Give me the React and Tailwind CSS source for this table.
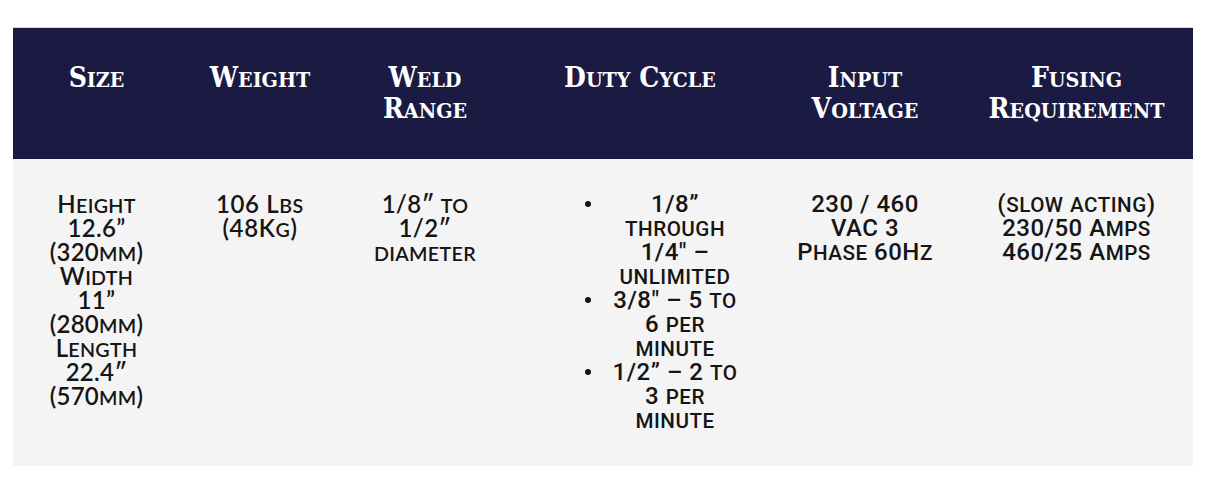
import React from "react";

const SmallCaps = ({ text, size = "body" }) => {
  const parts = text.split(/([a-z]+)/);
  const cls =
    size === "head"
      ? "text-[0.76em] leading-[0]"
      : size === "narrow"
      ? "text-[0.86em] leading-[0]"
      : "text-[0.82em] leading-[0]";
  return (
    <>
      {parts.map((part, i) =>
        /^[a-z]+$/.test(part) ? (
          <span key={i} className={cls}>
            {part.toUpperCase()}
          </span>
        ) : (
          <React.Fragment key={i}>{part}</React.Fragment>
        )
      )}
    </>
  );
};

const headers = [
  ["Size"],
  ["Weight"],
  ["Weld", "Range"],
  ["Duty Cycle"],
  ["Input", "Voltage"],
  ["Fusing", "Requirement"],
];

const wideFont = { fontFamily: "Lato, 'Open Sans', sans-serif" };
const narrowFont = { fontFamily: "Roboto, 'Liberation Sans', sans-serif" };

const Lines = ({ lines, font, size }) => (
  <div className="flex flex-col items-center text-center" style={font}>
    {lines.map((line, i) => (
      <div key={i} className="whitespace-nowrap h-[24px]">
        <SmallCaps text={line} size={size} />
      </div>
    ))}
  </div>
);

const dutyItems = [
  ["1/8”", "through", "1/4″ –", "unlimited"],
  ["3/8″ – 5 to", "6 per", "minute"],
  ["1/2” – 2 to", "3 per", "minute"],
];

const App = () => {
  return (
    <div className="w-[1214px] h-[491px] bg-white pt-[27px] px-[13px]">
      <div className="w-[1180px] border-t border-[#d4d4d4]">
        <div
          className="grid grid-cols-[167px_160px_170px_260px_190px_233px] h-[131px] bg-[#1b1a42] text-white font-bold text-[28px] leading-[31px] pt-[34px]"
          style={{ fontFamily: "'DejaVu Serif Condensed', 'DejaVu Serif', serif", fontStretch: "condensed" }}
        >
          {headers.map((h, i) => (
            <div key={i} className="flex flex-col items-center text-center">
              {h.map((line) => (
                <div key={line} className="whitespace-nowrap h-[31px]">
                  <SmallCaps text={line} size="head" />
                </div>
              ))}
            </div>
          ))}
        </div>

        <div className="grid grid-cols-[167px_160px_170px_260px_190px_233px] h-[307px] bg-[#f4f4f4] text-[#151515] text-[24px] leading-[24px] pt-[33px]">
          <div className="font-semibold tracking-[0.3px]">
            <Lines
              font={wideFont}
              lines={["Height", "12.6”", "(320mm)", "Width", "11”", "(280mm)", "Length", "22.4″", "(570mm)"]}
            />
          </div>
          <div className="font-semibold tracking-[0.6px]">
            <Lines font={wideFont} lines={["106 Lbs", "(48Kg)"]} />
          </div>
          <div className="font-semibold tracking-[0.3px]">
            <Lines font={wideFont} lines={["1/8″ to", "1/2″", "diameter"]} />
          </div>

          <ul className="flex flex-col pl-[75px] font-medium tracking-[0.5px]" style={narrowFont}>
            {dutyItems.map((item, i) => (
              <li key={i} className="flex">
                <span className="w-[27px] h-[24px] flex items-center">
                  <span className="w-[6px] h-[6px] rounded-full bg-[#151515]" />
                </span>
                <span className="w-[126px] flex flex-col items-center text-center">
                  {item.map((line) => (
                    <span key={line} className="whitespace-nowrap h-[24px]">
                      <SmallCaps text={line} size="narrow" />
                    </span>
                  ))}
                </span>
              </li>
            ))}
          </ul>

          <div className="font-medium tracking-[0.5px]">
            <Lines font={narrowFont} size="narrow" lines={["230 / 460", "VAC 3", "Phase 60Hz"]} />
          </div>
          <div className="font-medium tracking-[0.5px]">
            <Lines font={narrowFont} size="narrow" lines={["(slow acting)", "230/50 Amps", "460/25 Amps"]} />
          </div>
        </div>
      </div>
    </div>
  );
};

export default App;
